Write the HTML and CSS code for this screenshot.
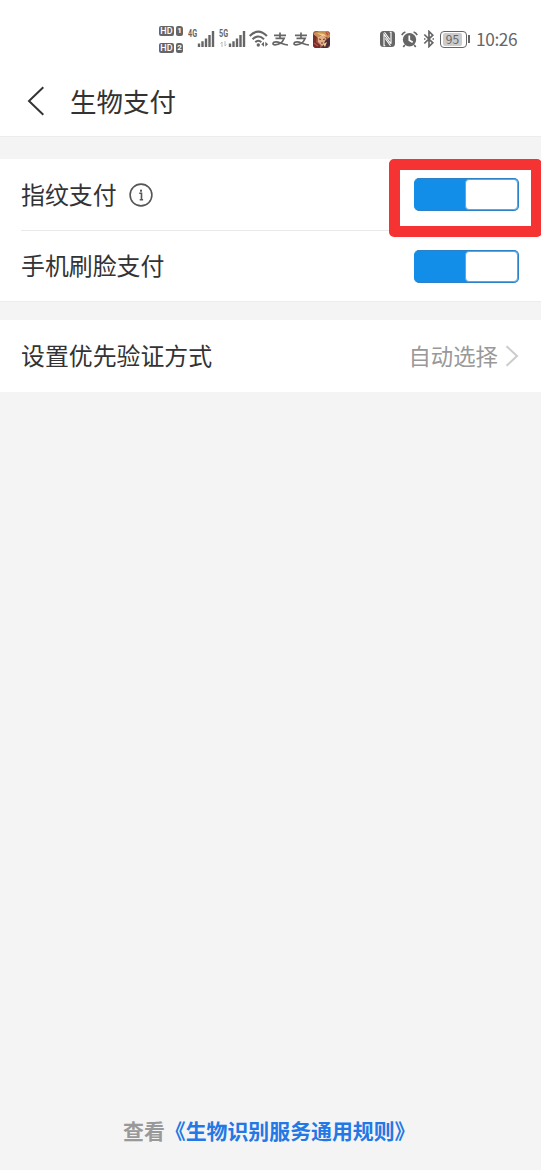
FILE: index.html
```html
<!DOCTYPE html>
<html lang="zh-CN">
<head>
<meta charset="utf-8">
<title>生物支付</title>
<link rel="stylesheet" href="styles.css">
</head>
<body>
<div class="screen">
  <div class="status">
    <div class="hd-group">
      <div class="hd-row"><span class="hd">HD</span><span class="sim">1</span></div>
      <div class="hd-row"><span class="hd">HD</span><span class="sim">2</span></div>
    </div>
    <div class="signal signal-4g">
      <span class="net">4G</span>
      <svg class="bars" width="18" height="16" viewBox="0 0 18 16"><path d="M.8 12.500h2.400V16H.8zM4.300 10.300h2.400V16H4.300zM7.800 7.500h2.400V16H7.800zM11.300 4h2.400v12h-2.400zM14.800 0h2.400v16h-2.400z"/></svg>
    </div>
    <div class="signal signal-5g">
      <span class="net">5G</span>
      <svg class="bars" width="18" height="16" viewBox="0 0 18 16"><path d="M.8 12.500h2.400V16H.8zM4.300 10.300h2.400V16H4.300zM7.800 7.500h2.400V16H7.800zM11.300 4h2.400v12h-2.400zM14.800 0h2.400v16h-2.400z"/></svg>
      <svg class="data" width="7" height="6" viewBox="0 0 7 6"><path d="M2 6V1L.5 2.500M5 0v5l1.500-1.500"/></svg>
    </div>
    <svg class="wifi" width="20" height="18" viewBox="0 0 20 18">
      <path class="arc" d="M.7 6Q9.300-2.600 17.900 6M3.600 9.200Q9.300 3.800 15 9.200M6.300 12.100Q9.300 9.400 12.300 12.100"/>
      <circle cx="9.300" cy="15" r="1.700"/><path d="M15 11.800v5L12.200 14.300zM16.300 11.800v5l2.800-2.500z"/>
    </svg>
    <svg class="zhi" width="17" height="15" viewBox="0 0 17 15"><path d="M2 3.300h12M8 .5v5.800M3.500 6.300h8.700C10.500 10.500 6.500 12.800 3 12.900 0 13 .5 9.800 4 9.800c3.500 0 7 2.900 12 3.200"/></svg>
    <svg class="zhi" width="17" height="15" viewBox="0 0 17 15"><path d="M2 3.300h12M8 .5v5.800M3.500 6.300h8.700C10.500 10.500 6.500 12.800 3 12.900 0 13 .5 9.800 4 9.800c3.500 0 7 2.900 12 3.200"/></svg>
    <svg class="game" width="17" height="17" viewBox="0 0 17 17">
      <rect width="17" height="17" rx="3" fill="#9b5945"/>
      <path d="M1 2l5-2h8l3 4v5l-4-4-5-1-4 3-3 5z" fill="#c99255"/>
      <path d="M5 6l4-2 4 3-1 6-3 2-4-4z" fill="#e3ad87"/>
      <path d="M0 3l4 3-1 5 4 3v3H2l-2-2z" fill="#7a2b2b"/>
      <path d="M12 10l5-4v8l-3 3H8l2-2z" fill="#4b2d3b"/>
      <path d="M4 2l7 1 3 3-5-1zM10 13l4-2-2 5z" fill="#f0ce86"/>
      <path d="M6 8l2 .5M10 8.500l2-.5M8 12h2" stroke="#6b382d"/>
      <path d="M1 12l4 3M13 1l2 3" stroke="#c94b38" stroke-width="1.500"/>
    </svg>
    <svg class="nfc" width="15" height="16" viewBox="0 0 15 16">
      <rect width="15" height="16" rx="3.500"/>
      <path class="cut" d="M5.300 14.800H4V3.200L10.800 12.800M9.700 1.200H11V12.800"/>
      <path class="cut" d="M4.500 1.200L9.800 8.500M5.300 7.500L10.500 14.800"/>
    </svg>
    <svg class="alarm" width="17" height="17" viewBox="0 0 17 17">
      <circle cx="8.500" cy="8.800" r="6.700"/>
      <path class="ears" d="M.8 4.200Q2 1.700 4.400 1M16.200 4.200Q15 1.700 12.600 1M3.800 14l-1.500 2M13.200 14l1.500 2"/>
      <path class="hands" d="M8.300 4.500v4.800l3.400 2"/>
    </svg>
    <svg class="bt" width="12" height="18" viewBox="0 0 12 18"><path d="M1.300 4.500l8.500 8.300L6 16.500v-15l3.800 3.700-8.500 8.300M1 9h1.500M9.500 9H11"/></svg>
    <div class="battery"><span class="level">95</span></div>
    <span class="battery-tip"></span>
    <span class="clock">10:26</span>
  </div>

  <header class="titlebar">
    <svg class="back" width="20" height="30" viewBox="0 0 20 30"><path d="M17.300 1.200L3 15l14.300 13.800"/></svg>
    <h1 class="title">生物支付</h1>
  </header>

  <main class="content">
    <section class="card switches">
      <div class="row">
        <span class="label">指纹支付</span>
        <svg class="info" width="24" height="24" viewBox="0 0 24 24"><circle cx="12" cy="12" r="10.900"/><path d="M10.200 10.300h2.300v6.500M10.700 16.800h3.400"/><rect x="11" y="6.700" width="2" height="2"/></svg>
        <span class="switch"><span class="knob"></span></span>
        <span class="highlight"></span>
      </div>
      <div class="divider"></div>
      <div class="row">
        <span class="label">手机刷脸支付</span>
        <span class="switch"><span class="knob"></span></span>
      </div>
    </section>
    <section class="card priority">
      <div class="row">
        <span class="label">设置优先验证方式</span>
        <span class="value">自动选择</span>
        <svg class="chevron" width="14" height="22" viewBox="0 0 14 22"><path d="M1.500 1.200L12 11 1.500 20.800"/></svg>
      </div>
    </section>
  </main>

  <footer class="footer"><span>查看</span><span class="link">《生物识别服务通用规则》</span></footer>
</div>
</body>
</html>
```

FILE: styles.css
```css
* { box-sizing: border-box; }

body {
  margin: 0;
  background: #f4f4f4;
  color: #333;
  font-family: "Noto Sans CJK SC", sans-serif;
}

svg { display: block; flex: none; }

.screen {
  display: flex;
  flex-direction: column;
  width: 541px;
  height: 1170px;
  overflow: hidden;
}

.status {
  display: flex;
  align-items: center;
  flex: none;
  height: 66px;
  padding: 12px 0 0 159px;
  background: #fff;
  color: #666;
  fill: #666;
  font-family: Roboto, sans-serif;
}

.hd-group { display: flex; flex-direction: column; gap: 7px; width: 25px; flex: none; }
.hd-row { display: flex; gap: 2px; }
.hd, .sim {
  height: 10px;
  border-radius: 2px;
  background: #666;
  color: #fff;
  font-size: 9px;
  font-weight: 500;
  line-height: 10px;
  text-align: center;
}
.hd { width: 15px; }
.sim { width: 7px; font-size: 8px; font-weight: 700; border-top-right-radius: 3px; }

.signal { position: relative; flex: none; height: 20px; }
.signal-4g { width: 27px; margin-left: 4px; }
.signal-5g { width: 27px; margin-left: 4px; }
.net {
  position: absolute;
  left: 0;
  top: 0;
  font-size: 10px;
  font-weight: 700;
  line-height: 10px;
  transform: scaleX(.72);
  transform-origin: left;
}
.bars { position: absolute; right: 0; bottom: 2px; }
.data { position: absolute; left: 1px; bottom: 2px; fill: none; stroke: #bbb; }

.wifi { margin-left: 3px; }
.arc { fill: none; stroke: #666; stroke-width: 2.1; }
.zhi { margin-left: 3px; fill: none; stroke: #666; stroke-width: 1.7; }
.zhi + .zhi { margin-left: 4px; }
.game { margin-left: 3px; }
.nfc { margin-left: 50px; }
.cut { fill: none; stroke: #fff; stroke-width: 1.1; }
.alarm { margin-left: 6px; }
.ears { fill: none; stroke: #666; stroke-width: 1.7; }
.hands { fill: none; stroke: #fff; stroke-width: 1.7; }
.bt { margin-left: 5px; fill: none; stroke: #666; stroke-width: 1.7; }

.battery {
  flex: none;
  width: 27px;
  height: 17px;
  margin-left: 5px;
  padding: 1px;
  border: 1.500px solid #666;
  border-radius: 4px;
}
.level {
  display: block;
  width: 19px;
  height: 13px;
  margin-left: 1px;
  border-radius: 2px;
  background: #ccc;
  font-family: "Noto Sans CJK SC", sans-serif;
  font-size: 12px;
  line-height: 12px;
  text-align: center;
}
.battery-tip { width: 2px; height: 8px; margin-left: 1px; background: #666; }
.clock {
  margin-left: 6px;
  font-family: "Noto Sans CJK SC", sans-serif;
  font-size: 17.300px;
  letter-spacing: -.4px;
  line-height: 20px;
}

.titlebar {
  display: flex;
  align-items: center;
  flex: none;
  height: 71px;
  padding-left: 26px;
  background: #fff;
  border-bottom: 1px solid #ececec;
}
.back { fill: none; stroke: #333; stroke-width: 2; }
.title { margin: 0 0 0 24px; font-size: 26.500px; font-weight: 400; line-height: 40px; }

.content { flex: 1; }
.card { background: #fff; }
.switches { margin-top: 22px; border-bottom: 1px solid #ececec; }
.priority { margin-top: 18px; }
.row {
  display: flex;
  align-items: center;
  position: relative;
  height: 71px;
  padding: 0 22px 0 21px;
}
.divider + .row { height: 70px; }
.priority .row { height: 72px; }
.divider { height: 1px; margin-left: 21px; background: #e9e9e9; }
.label { padding-bottom: 2px; font-size: 23.900px; line-height: 36px; }
.info { margin-left: 12px; fill: #555; }
.info circle, .info path { fill: none; stroke: #555; stroke-width: 1.600; }

.switch {
  display: flex;
  justify-content: flex-end;
  width: 105px;
  height: 33px;
  margin-left: auto;
  border: 1px solid #2b82c9;
  border-left-color: #128ee9;
  border-radius: 5px;
  background: #128ee9;
}
.knob { width: 53px; border: 1px solid #5aa9e6; border-radius: 4px; background: #fff; }

.highlight {
  position: absolute;
  left: 389px;
  top: 0;
  width: 153px;
  height: 78px;
  border: 11px solid #f53333;
  border-radius: 5px;
  z-index: 1;
}

.value { margin-left: auto; padding-bottom: 3px; color: #999; font-size: 22.400px; line-height: 34px; }
.chevron { margin-left: 7px; fill: none; stroke: #ccc; stroke-width: 2; }

.footer {
  flex: none;
  height: 56px;
  padding-left: 123px;
  color: #999;
  font-size: 20.900px;
  font-weight: 700;
  line-height: 32px;
  white-space: nowrap;
}
.link { color: #2378e5; }
```
